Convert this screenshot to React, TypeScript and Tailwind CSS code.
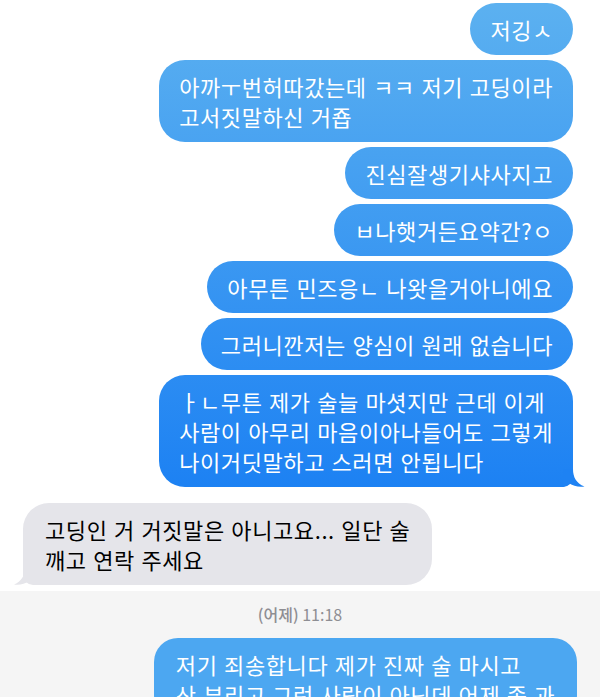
import type { ReactNode } from "react";

const sent = [
  ["저깅ㅅ"],
  ["아까ㅜ번허따갔는데 ㅋㅋ 저기 고딩이라", "고서짓말하신 거죱"],
  ["진심잘생기샤사지고"],
  ["ㅂ나햇거든요약간?ㅇ"],
  ["아무튼 민즈응ㄴ 나왓을거아니에요"],
  ["그러니깐저는 양심이 원래 없습니다"],
  ["ㅏㄴ무튼 제가 술늘 마셧지만 근데 이게", "사람이 아무리 마음이아나들어도 그렇게", "나이거딧말하고 스러면 안됩니다"],
];

function Lines({ lines }: { lines: string[] }) {
  return (
    <>
      {lines.map((l, i) => (
        <div key={i} className="whitespace-nowrap">
          {l}
        </div>
      ))}
    </>
  );
}

function BlueBubble({ lines, tail, children }: { lines: string[]; tail?: boolean; children?: ReactNode }) {
  return (
    <div
      className={`relative rounded-[26px] bg-[linear-gradient(180deg,#5cb1f0_0px,#1b80f3_500px)] bg-fixed px-5 py-[11px] text-white ${
        tail ? "rounded-br-[10px]" : ""
      }`}
    >
      <Lines lines={lines} />
      {tail ? (
        <svg className="absolute -right-[12px] bottom-0" width="22" height="18" viewBox="0 0 22 18">
          <path d="M0 0H10C10 8 13 14 21.5 17.6C15 18.3 10 17 6.5 14.6C5 16.2 3 17.4 0 18Z" fill="#1e82f3" />
        </svg>
      ) : null}
      {children}
    </div>
  );
}

export default function App() {
  return (
    <main className="min-h-screen overflow-hidden bg-white font-['Noto_Sans_CJK_KR','Noto_Sans',sans-serif] text-[22px] leading-[30px] tracking-[0.6px] [word-spacing:1px]">
      <section className="flex flex-col items-end gap-[5px] pt-[3px] pr-[27px]">
        {sent.map((lines, i) => (
          <BlueBubble key={i} lines={lines} tail={i === sent.length - 1} />
        ))}
      </section>

      <section className="mt-[16px] flex pl-[23px]">
        <div className="relative rounded-[26px] rounded-bl-[10px] bg-[#e5e5ea] px-[22px] py-[11px] text-black">
          <Lines lines={["고딩인 거 거짓말은 아니고요... 일단 술", "깨고 연락 주세요"]} />
          <svg className="absolute -left-[10px] bottom-0" width="22" height="18" viewBox="0 0 22 18">
            <path d="M22 0H12C12 8 9 14 1 17.6C7 18.3 12 17 15.5 14.6C17 16.2 19 17.4 22 18Z" fill="#e5e5ea" />
          </svg>
        </div>
      </section>

      <section className="mt-[6px] bg-[#f5f5f5] pb-10 pt-[13px]">
        <div className="text-center text-[16px] leading-5 tracking-normal text-[#8e8e93] [word-spacing:0]">
          <span className="font-medium">(어제)</span> 11:18
        </div>
        <div className="mt-[14px] flex justify-end pr-[23px]">
          <div className="rounded-[24px] bg-[#4ca7f1] px-[22px] py-[11px] text-white">
            <Lines lines={["저기 죄송합니다 제가 진짜 술 마시고", "산 부리고 그런 사람이 아닌데 어제 좀 과"]} />
          </div>
        </div>
      </section>
    </main>
  );
}
